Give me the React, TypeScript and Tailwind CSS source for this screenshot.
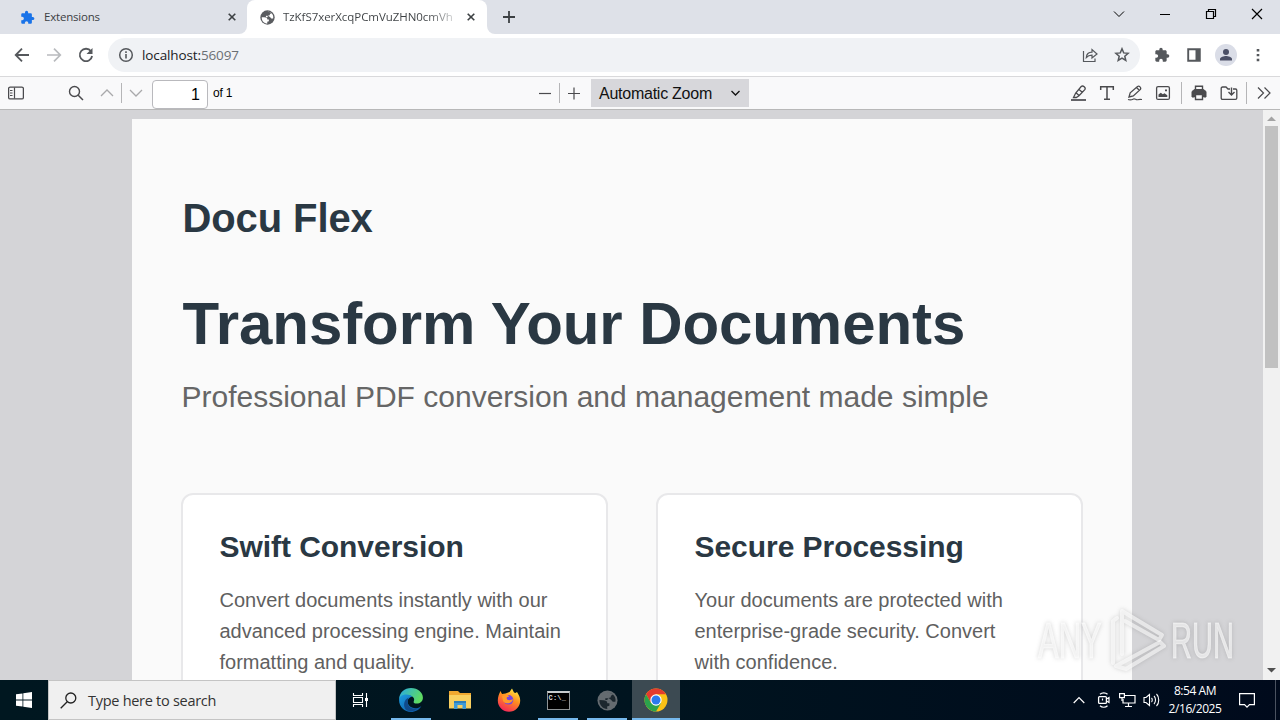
import type { ReactNode } from "react";

type IconProps = { w?: number; h?: number; box?: string; className?: string; children: ReactNode };

function Icon({ w = 16, h = 16, box, className = "", children }: IconProps) {
  return (
    <svg
      width={w}
      height={h}
      viewBox={box ?? `0 0 ${w} ${h}`}
      fill="none"
      stroke="currentColor"
      className={`block flex-shrink-0 ${className}`}
    >
      {children}
    </svg>
  );
}

const PUZZLE =
  "M20.5 11H19V7c0-1.1-.9-2-2-2h-4V3.5a2.5 2.5 0 0 0-5 0V5H4c-1.1 0-2 .9-2 2v3.8h1.5a2.7 2.7 0 0 1 0 5.4H2V20c0 1.1.9 2 2 2h3.8v-1.5a2.7 2.7 0 0 1 5.4 0V22H17c1.1 0 2-.9 2-2v-4h1.5a2.5 2.5 0 0 0 0-5z";

function Globe({ size, land, sea }: { size: number; land: string; sea: string }) {
  return (
    <Icon w={size} h={size} box="0 0 24 24">
      <circle cx="12" cy="12" r="11.500" fill={sea} stroke="none" />
      <path
        d="M2.800 11.500l4.200.2c3 .2 4.800 1 4.800 3.300h2.400v3l-2.700.8.300 2.900C6.500 21.500 2.500 17.500 2.800 11.500z"
        fill={land}
        stroke="none"
      />
      <path
        d="M11.500 2.800c2.500-.3 5 .6 6.700 2.200L16 6.500l-.5 2-2.700.5-1 2.500H9.500V9.300l4 .2 2.500 1.500 2 2.500h3c.8-3.500-.3-6.500-2.800-8.500L14.500 3z"
        fill={land}
        stroke="none"
      />
    </Icon>
  );
}

function Cross() {
  return (
    <Icon w={8} h={8}>
      <path d="M.7.7l6.600 6.600M7.300.7L.7 7.300" strokeWidth="1.600" />
    </Icon>
  );
}

function TabStrip() {
  return (
    <div className="flex h-[34px] bg-white text-[#3c4043]">
      <div className="flex w-[247px] items-center rounded-br-lg bg-[#dee1e8] pl-5 pr-[11px]">
        <Icon w={15} h={15} box="0 0 24 24" className="text-[#1a73e8]">
          <path d={PUZZLE} fill="currentColor" stroke="none" />
        </Icon>
        <span className="ml-[9px] flex-1 text-[11.500px] tracking-[-0.2px]">Extensions</span>
        <Cross />
      </div>
      <div className="flex w-[240px] bg-[#dee1e8]">
        <div className="flex w-full items-center rounded-t-lg bg-white pl-[13px] pr-3">
          <Globe size={15} land="#ffffff" sea="#5a5c60" />
          <span className="ml-2 whitespace-nowrap bg-linear-to-r from-[#3c4043] from-85% to-[#3c4043]/25 bg-clip-text text-[11.500px] tracking-[-0.05px] text-transparent">
            TzKfS7xerXcqPCmVuZHN0cmVh
          </span>
          <span className="ml-auto">
            <Cross />
          </span>
        </div>
      </div>
      <div className="flex flex-1 rounded-bl-lg bg-[#dee1e8]">
        <div className="flex w-[44px] items-center justify-center">
          <Icon w={12} h={12}>
            <path d="M6 0v12M0 6h12" strokeWidth="1.800" />
          </Icon>
        </div>
        <div className="ml-auto flex items-center pb-1.5 pr-[17px] text-black">
          <Icon w={12} h={12}>
            <path d="M1 3.500l5 5 5-5" strokeWidth="1" />
          </Icon>
          <Icon w={12} h={12} className="ml-[34px]">
            <path d="M1 6.500h10" />
          </Icon>
          <Icon w={12} h={12} className="ml-[34px]">
            <path d="M1.500 3.500h7v7h-7zM3.500 3.500v-2h7v7h-2" strokeWidth="1.200" />
          </Icon>
          <Icon w={12} h={12} className="ml-[34px]">
            <path d="M1 1l10 10M11 1L1 11" strokeWidth="1.200" />
          </Icon>
        </div>
      </div>
    </div>
  );
}

function AddressBar() {
  return (
    <div className="flex h-[42px] items-center bg-white pl-3.5 pr-3 text-[#55585c]">
      <Icon>
        <path d="M15 8H2M8 1.700L1.700 8 8 14.300" strokeWidth="1.800" />
      </Icon>
      <Icon className="ml-4 text-[#b9bbbe]">
        <path d="M1 8h13M8 1.700L14.300 8 8 14.300" strokeWidth="1.700" />
      </Icon>
      <Icon className="ml-4">
        <path d="M13 4.300A6.200 6.200 0 1 0 14.100 9" strokeWidth="1.800" />
        <path d="M14.500 1v6h-6z" fill="currentColor" stroke="none" />
      </Icon>
      <div className="ml-3.5 flex h-[34px] w-[1032px] items-center rounded-full bg-[#f0f2f5] pl-2.5 pr-2.5">
        <Icon>
          <circle cx="8" cy="8" r="6.300" strokeWidth="1.500" />
          <path d="M8 7v4.500M8 4.300v1.600" strokeWidth="1.600" />
        </Icon>
        <span className="ml-2 flex-1 text-[13.500px] tracking-[-0.12px] text-[#202124]">
          localhost:<span className="text-[#6b6f74]">56097</span>
        </span>
        <Icon>
          <path d="M1.500 4v10.500h11.500v-3" strokeWidth="1.200" />
          <path d="M4.300 10.500c.3-3.500 2.500-5.200 5.700-5.300V2.500l5 4.500-5 4V8.200c-2.500 0-4.300.7-5.700 2.300z" strokeWidth="1.200" />
        </Icon>
        <Icon className="ml-4">
          <path
            d="M8 1.800l1.700 4.100 4.400.4-3.300 2.900 1 4.300L8 11.200l-3.800 2.300 1-4.300-3.300-2.900 4.400-.4z"
            strokeWidth="1.500"
          />
        </Icon>
      </div>
      <Icon w={16} h={16} box="0 0 24 24" className="ml-3.5">
        <path d={PUZZLE} fill="currentColor" stroke="none" />
      </Icon>
      <Icon className="ml-4">
        <path d="M2.200 2.200h11.600v11.600H2.200z" strokeWidth="1.900" />
        <path d="M9.500 2h4.500v12H9.500z" fill="currentColor" stroke="none" />
      </Icon>
      <div className="ml-[13px] flex h-[22px] w-[22px] items-center justify-center rounded-full bg-[#dadde7] text-[#4a4f66]">
        <Icon w={14} h={14}>
          <circle cx="7" cy="4" r="3" fill="currentColor" stroke="none" />
          <path d="M1 12.500V11c0-2 4-3 6-3s6 1 6 3v1.500z" fill="currentColor" stroke="none" />
        </Icon>
      </div>
      <Icon w={4} h={14} className="ml-[19px]">
        <path d="M2 1v2.400M2 5.900v2.400M2 10.800v2.400" strokeWidth="2.600" />
      </Icon>
    </div>
  );
}

function PdfToolbar() {
  return (
    <div className="flex h-[34px] items-center border-y border-t-[#d9d9db] border-b-[#b8b8b8] bg-[#f9f9fa] pl-2 pr-[9px] text-[#4a4a4d]">
      <Icon>
        <rect x=".6" y="2.100" width="14.800" height="11.800" rx="1.500" strokeWidth="1.300" />
        <path d="M6.500 2.500v11M2 5.500h2.500M2 8h2.500M2 10.500h2.500" strokeWidth="1.200" />
      </Icon>
      <Icon className="ml-11">
        <circle cx="6.500" cy="6.500" r="5" strokeWidth="1.400" />
        <path d="M10.200 10.200l4.800 4.800" strokeWidth="1.500" />
      </Icon>
      <Icon w={14} h={16} className="ml-4 text-[#a9a9ab]">
        <path d="M1 11l6-6 6 6" strokeWidth="1.300" />
      </Icon>
      <div className="ml-[7px] h-5 w-px bg-[#b5b5b7]" />
      <Icon w={14} h={16} className="ml-[7px] text-[#a9a9ab]">
        <path d="M1 5l6 6 6-6" strokeWidth="1.300" />
      </Icon>
      <div className="ml-[9px] mt-0.5 flex h-[29px] w-14 items-center justify-end rounded-sm border border-[#b9b9bd] bg-white pr-[7px] pt-px font-['Liberation_Sans',Arial,sans-serif] text-base text-black">
        1
      </div>
      <span className="ml-[5px] w-5 whitespace-nowrap font-['Liberation_Sans',Arial,sans-serif] text-[12px] tracking-[-0.2px] text-black">
        of 1
      </span>

      <Icon w={12} h={16} className="ml-[306px]">
        <path d="M0 8.500h12" strokeWidth="1.200" />
      </Icon>
      <div className="ml-2 h-5 w-px bg-[#b5b5b7]" />
      <Icon w={12} h={16} className="ml-2">
        <path d="M0 8.500h12M6 2.500v12" strokeWidth="1.200" />
      </Icon>
      <div className="ml-[11px] flex h-7 w-[158px] items-center justify-between bg-[#d7d7db] pl-2 pr-2 font-['Liberation_Sans',Arial,sans-serif] text-[16px] text-[#111]">
        <span className="mt-0.5 whitespace-nowrap tracking-[-0.25px]">Automatic Zoom</span>
        <Icon w={11} h={8}>
          <path d="M1.500 2l4 4 4-4" strokeWidth="1.300" />
        </Icon>
      </div>

      <div className="ml-auto flex items-center">
        <Icon>
          <path d="M0 15h15" strokeWidth="1.700" />
          <path d="M2.500 12.500l2.200-4.500 5.500-6.500c1.800-1.500 5 1 3.600 3.200L8 10.800l-2.700 1.700zM5 7.800l3.300 3M8 4.500l3.300 2.800" strokeWidth="1.300" />
        </Icon>
        <Icon w={16} h={16} className="ml-3">
          <path d="M1.700 5V1.800h12.600V5M8 2v12M5 14.200h6" strokeWidth="1.500" />
        </Icon>
        <Icon className="ml-3">
          <path d="M2 12l1.200-4.200 7.300-6.300c1.700-1 4 1 2.900 2.900L6.300 11zM9.500 2.500l2.800 2.800" strokeWidth="1.300" />
          <path d="M1 14.500c3 1 4.500-.1 5.500-.5 1.500-.6 2.500 1.200 4 .7 1-.3 2.500-.3 4.500-.2" strokeWidth="1.200" />
        </Icon>
        <Icon className="ml-3">
          <rect x="1.600" y="1.600" width="12.800" height="12.800" rx="1.500" strokeWidth="1.300" />
          <path d="M3.500 12V9.500l2.300-1.700 2 1.500 1.700-1 2.800 2V12z" fill="currentColor" stroke="none" />
          <path d="M10 5.300h2" strokeWidth="1.800" />
        </Icon>
        <div className="ml-[10px] h-[22px] w-px bg-[#b5b5b7]" />
        <Icon className="ml-[9px]">
          <path d="M1 6.500L3.500 4.500h9L15 6.500V12h-2.500V9.500h-9V12H1z" fill="currentColor" strokeWidth="1" />
          <path d="M4.500 5V1.200h7V5M4.500 9.500h7v5h-7z" strokeWidth="1.400" />
        </Icon>
        <Icon w={18} h={16} className="ml-[13px]">
          <path d="M6 14.300H2.500c-.8 0-1.300-.5-1.300-1.300V3.300c0-.8.500-1.300 1.300-1.300H6l2 2h2M13 4h2.500c.8 0 1.300.5 1.300 1.300V13c0 .8-.5 1.300-1.300 1.300H6" strokeWidth="1.300" />
          <path d="M11.500 2.500v7M8.500 7l3 3 3-3" strokeWidth="1.400" />
        </Icon>
        <div className="ml-2 h-[22px] w-px bg-[#b5b5b7]" />
        <Icon w={14} h={16} className="ml-[10px]">
          <path d="M1 2.500L6.500 8 1 13.500M7.500 2.500L13 8l-5.500 5.500" strokeWidth="1.200" />
        </Icon>
      </div>
    </div>
  );
}

const FEATURES = [
  {
    title: "Swift Conversion",
    lines: ["Convert documents instantly with our", "advanced processing engine. Maintain", "formatting and quality."],
  },
  {
    title: "Secure Processing",
    lines: ["Your documents are protected with", "enterprise-grade security. Convert", "with confidence."],
  },
];

function PdfPage() {
  return (
    <div className="h-[561px] w-[1000px] overflow-hidden bg-[#fafafa] px-[50px] font-['Liberation_Sans',Arial,sans-serif]">
      <div className="mt-[76px] pl-px text-[40px] font-bold leading-[46px] tracking-[-0.1px] text-[#2a3843]">
        Docu Flex
      </div>
      <h1 className="mt-[48px] whitespace-nowrap pl-px text-[60px] font-bold leading-[70px] tracking-[-0.08px] text-[#2a3843]">
        Transform Your Documents
      </h1>
      <p className="mt-[20px] whitespace-nowrap text-[30px] leading-[36px] text-[#666]">
        Professional PDF conversion and management made simple
      </p>
      <div className="-mx-px mt-[78px] flex justify-between">
        {FEATURES.map((f) => (
          <div key={f.title} className="h-[300px] w-[427px] rounded-xl border-2 border-[#e8e8ea] bg-white px-[37px] pt-[35px]">
            <h2 className="whitespace-nowrap text-[30px] font-bold leading-[34px] tracking-[-0.05px] text-[#2a3843]">
              {f.title}
            </h2>
            <div className="mt-[21px] text-[20px] leading-[31px] text-[#606060]">
              {f.lines.map((l) => (
                <div key={l} className="whitespace-nowrap">
                  {l}
                </div>
              ))}
            </div>
          </div>
        ))}
      </div>
    </div>
  );
}

function Scrollbar() {
  return (
    <div className="flex w-[17px] flex-col items-center bg-[#f1f1f1]">
      <Icon w={9} h={5} className="mt-[6px] text-[#a3a3a3]">
        <path d="M0 5l4.500-4.500L9 5z" fill="currentColor" stroke="none" />
      </Icon>
      <div className="mt-[5px] h-[242px] w-[13px] bg-[#c1c1c1]" />
      <Icon w={9} h={5} className="mb-[7px] mt-auto text-[#505050]">
        <path d="M0 0l4.500 4.500L9 0z" fill="currentColor" stroke="none" />
      </Icon>
    </div>
  );
}

function Watermark() {
  return (
    <div className="absolute left-[1038px] top-[606px] flex h-[70px] items-center font-['Liberation_Sans',Arial,sans-serif] text-[50px] text-white/60 [filter:drop-shadow(0_0_2px_rgba(90,90,90,0.4))]">
      <span className="w-[67px]">
        <span className="inline-block origin-left scale-x-[0.62] [-webkit-text-stroke:1px_rgba(255,255,255,0.5)]">ANY</span>
      </span>
      <Icon w={62} h={66} className="text-white/60">
        <g strokeWidth="4" strokeLinejoin="round" strokeLinecap="round">
          <path d="M12 10l-4 3v42M17 46V3l40 24-3 5-34-19" />
          <path d="M55 34l4 4-38 23-10-3 44-24" />
        </g>
      </Icon>
      <span className="ml-1">
        <span className="inline-block origin-left scale-x-[0.58] [-webkit-text-stroke:1px_rgba(255,255,255,0.5)]">RUN</span>
      </span>
    </div>
  );
}

function EdgeIcon() {
  return (
    <Icon w={26} h={26} box="0 0 24 24">
      <defs>
        <linearGradient id="edgeTop" x1="0" y1="0" x2="1" y2="0.4">
          <stop offset="0" stopColor="#27a9e8" />
          <stop offset="1" stopColor="#5edb62" />
        </linearGradient>
        <linearGradient id="edgeLow" x1="0" y1="0" x2="1" y2="1">
          <stop offset="0" stopColor="#1b9de2" />
          <stop offset="1" stopColor="#0c4f9c" />
        </linearGradient>
      </defs>
      <path d="M1 11C1.500 5 6 1 12 1c6.500 0 11 4.300 11 9 0 3.500-2.800 5.300-5.500 5.300-2.500 0-3.500-1-3-2 1.500-3-1-5.300-4-5.300-4.500 0-8 1.200-9.500 3z" fill="url(#edgeTop)" stroke="none" />
      <path d="M1 12c0-3 3-5 6.500-5 3 0 5 1 5.500 2-3 .5-4.500 3-4 5.800.7 3.200 4.500 5.200 8 4.700 2-.3 3.200-1 4.500-1.800C19.500 21 16 23 12 23 6 23 1 18.500 1 12z" fill="url(#edgeLow)" stroke="none" />
      <path d="M9 13.500c-.3 4.500 4 7.500 9 6.400-3 2.600-7.500 3.300-10.500 1.100C4.500 18.500 5 11.500 10 9.800c-.7 1-.9 2.300-1 3.700z" fill="#104a8b" stroke="none" />
    </Icon>
  );
}

function FolderIcon() {
  return (
    <Icon w={22} h={18}>
      <path d="M0 0h9l2 2h11v15H0z" fill="#f0a830" stroke="none" />
      <path d="M0 4h22v13.500H0z" fill="#f9d060" stroke="none" />
      <path d="M5 18v-7h12v7h-3.500v-4h-5v4z" fill="#3f9bd8" stroke="none" />
      <path d="M5 10h12v2H5z" fill="#2f7fb8" stroke="none" />
    </Icon>
  );
}

function FirefoxIcon() {
  return (
    <Icon w={24} h={24}>
      <defs>
        <linearGradient id="fox" x1="0.8" y1="0" x2="0.3" y2="1">
          <stop offset="0" stopColor="#fff044" />
          <stop offset="0.450" stopColor="#ff8f1f" />
          <stop offset="1" stopColor="#f5245b" />
        </linearGradient>
      </defs>
      <path d="M3.500 3l1.500 3 3.500-.5 4-1.500L15 .5l2 4 1.500.5 1.500-1c2 3 3.200 5.500 3.200 8.500a11.200 11.200 0 0 1-22.400 0C.8 9 2 6 3.500 3z" fill="url(#fox)" stroke="none" />
      <circle cx="11.500" cy="11.800" r="4.800" fill="#7543e0" stroke="none" />
      <path d="M5 8l5-1.500 2.500 2c-3 .3-3.500 1.800-2 3.200 1.800 1 4 .3 5.500-.7-.5 4.500-7.500 6-10 2z" fill="#ff9a2b" stroke="none" />
    </Icon>
  );
}

function ChromeIcon() {
  return (
    <Icon w={24} h={24}>
      <circle cx="12" cy="12" r="11.500" fill="#fbc116" stroke="none" />
      <path d="M2 6.300A11.500 11.500 0 0 1 22 6.300H12L7 15z" fill="#e33b2e" stroke="none" />
      <path d="M2 6.300A11.500 11.500 0 0 0 12 23.500L17 15l-10 0z" fill="#2ba24c" stroke="none" />
      <circle cx="12" cy="12" r="5.700" fill="#fff" stroke="none" />
      <circle cx="12" cy="12" r="4.500" fill="#2a79ee" stroke="none" />
    </Icon>
  );
}

function TaskApp({ running, active, children }: { running?: boolean; active?: boolean; children: ReactNode }) {
  return (
    <div className={`mr-px flex h-10 w-12 flex-col items-center ${active ? "bg-[#3c4a52]" : ""}`}>
      <div className="flex h-[38px] items-center pt-0.5">{children}</div>
      {running && <div className={`h-0.5 bg-[#76b9ed] ${active ? "w-12" : "w-10"}`} />}
    </div>
  );
}

function Taskbar() {
  return (
    <div className="flex h-10 bg-linear-to-r from-[#001720] via-[#00141f] via-50% to-[#000a1c] text-white">
      <div className="flex w-12 items-center justify-center">
        <Icon w={16} h={16}>
          <path d="M0 2.300L6.500 1.400v6.200H0zM7.300 1.300L16 0v7.600H7.300zM0 8.400h6.500v6.200L0 13.700zM7.300 8.400H16V16l-8.700-1.200z" fill="#fff" stroke="none" />
        </Icon>
      </div>
      <div className="flex w-[288px] items-center border border-[#c4c4c4] bg-[#f0f0f0] pl-[11px] text-[#222]">
        <Icon w={17} h={17}>
          <circle cx="10.800" cy="6" r="5" strokeWidth="1.300" />
          <path d="M7.200 9.700L.7 16.300" strokeWidth="1.300" />
        </Icon>
        <span className="ml-[11px] mt-px text-[14.500px] tracking-[-0.28px] text-[#333]">Type here to search</span>
      </div>
      <div className="flex w-[51px] items-center justify-center pr-[3px]">
        <Icon w={17} h={16}>
          <path d="M1.500 1v2.500h9V1M1.500 5.500h9v5h-9zM1.500 15v-2.500h9V15M14.500 1v14" strokeWidth="1.100" />
          <path d="M13 6h3v3h-3z" fill="#fff" stroke="none" />
        </Icon>
      </div>
      <TaskApp running>
        <EdgeIcon />
      </TaskApp>
      <TaskApp>
        <FolderIcon />
      </TaskApp>
      <TaskApp>
        <FirefoxIcon />
      </TaskApp>
      <TaskApp running>
        <div className="h-[19px] w-[23px] border border-[#8f9496] border-t-2 border-t-[#c9cccd] bg-black pl-px pt-px font-['Liberation_Mono',monospace] text-[7px] font-bold leading-[8px] tracking-[0.2px] text-[#ddd]">
          C:\_
        </div>
      </TaskApp>
      <TaskApp running>
        <Globe size={21} land="#1c272e" sea="#646b70" />
      </TaskApp>
      <TaskApp running active>
        <ChromeIcon />
      </TaskApp>

      <div className="ml-auto flex items-center">
        <Icon w={12} h={8}>
          <path d="M.7 7L6 1.500 11.300 7" strokeWidth="1.200" />
        </Icon>
        <Icon w={14} h={16} className="ml-[12px]">
          <path d="M3 2.200C5 .3 8.500.3 10.500 2.200M3 13.800c2 1.900 5.500 1.900 7.500 0" strokeWidth="1.200" />
          <rect x="1.600" y="4.600" width="7.800" height="6.800" rx="1" strokeWidth="1.300" />
          <path d="M9.500 7l2.500-1.500v5L9.500 9M5.500 6.500v2" strokeWidth="1.200" />
        </Icon>
        <Icon w={17} h={16} className="ml-[8px]">
          <path d="M6 3.500h10v7.500H4V7M9.500 11v3M6 14.500h7" strokeWidth="1.200" />
          <path d="M.6 1.600h4.800v4H.6zM3 5.500V9" strokeWidth="1.200" />
        </Icon>
        <Icon w={17} h={16} className="ml-[7px]">
          <path d="M1 5.500h2l3.500-3v11l-3.500-3H1zM8.500 6c1 1 1 3 0 4M11 4c2 2 2 6 0 8M13.500 2c3 3 3 9 0 12" strokeWidth="1.100" />
        </Icon>
        <div className="ml-2 w-[54px] text-center text-[12px] leading-[18px] tracking-[-0.45px]">
          <div>8:54 AM</div>
          <div>2/16/2025</div>
        </div>
        <Icon w={16} h={16} className="ml-[17px]">
          <path d="M.6 1.600h14.800v11H10.500l-2.500 2.500-2.500-2.500H.6z" strokeWidth="1.200" />
        </Icon>
        <div className="ml-5 mr-1 h-10 w-px bg-[#4a5260]" />
      </div>
    </div>
  );
}

export default function App() {
  return (
    <div className="relative flex h-[720px] w-[1280px] flex-col overflow-hidden font-['Open_Sans','Noto_Sans',sans-serif]">
      <TabStrip />
      <AddressBar />
      <PdfToolbar />
      <div className="flex h-[570px] bg-[#d4d4d7]">
        <div className="flex flex-1 justify-center overflow-hidden pt-[9px]">
          <PdfPage />
        </div>
        <Scrollbar />
      </div>
      <Taskbar />
      <Watermark />
    </div>
  );
}
